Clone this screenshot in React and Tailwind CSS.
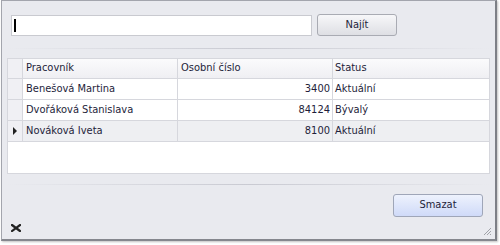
import React from 'react';

const ROWS = [
  { name: 'Benešová Martina', num: '3400', status: 'Aktuální' },
  { name: 'Dvořáková Stanislava', num: '84124', status: 'Bývalý' },
  { name: 'Nováková Iveta', num: '8100', status: 'Aktuální', current: true },
];

export default function App() {
  return (
    <div className="w-[500px] h-[245px] bg-white" style={{ fontFamily: '"DejaVu Sans Condensed", "DejaVu Sans", sans-serif' }}>
      <div className="ml-[1px] w-[496px] h-[241px] bg-[#e9eaef] border-l border-t border-[#a3a5ad] border-r-2 border-b-2 border-r-[#7d7f86] border-b-[#85878e] shadow-[1px_1px_2px_rgba(0,0,0,0.25)] flex flex-col text-[11px] text-[#1e1e3a]">
        {/* search */}
        <div className="flex items-center mt-[13px] ml-[9px] h-[22px]">
          <div className="w-[301px] h-[21px] bg-white border border-[#c9cad0] flex items-center pl-[2px]">
            <div className="w-[2px] h-[13px] bg-black" />
          </div>
          <button className="ml-[5px] w-[80px] h-[22px] rounded-[3px] border border-[#a9abb3] bg-gradient-to-b from-[#f7f7f9] to-[#dedfe4] text-[#1e1e3a]">Najít</button>
        </div>

        <div className="mt-[12px] mx-[6px] h-px bg-gradient-to-r from-[#e9eaef] via-[#c9cad2] to-[#e9eaef]" />

        {/* grid */}
        <div className="mt-[9px] ml-[5px] w-[483px] h-[116px] bg-white border border-[#d6d7dd] flex flex-col">
          <div className="flex h-[20px] bg-gradient-to-b from-[#fbfbfc] to-[#efeff3] border-b border-[#d6d7dd]">
            <div className="w-[15px] border-r border-[#d6d7dd] bg-[#f0f0f4]" />
            <div className="w-[155px] border-r border-[#d6d7dd] pl-[3px] flex items-center">Pracovník</div>
            <div className="w-[155px] border-r border-[#d6d7dd] pl-[3px] flex items-center">Osobní číslo</div>
            <div className="flex-1 pl-[2px] flex items-center">Status</div>
          </div>
          {ROWS.map((r) => (
            <div key={r.name} className={`flex h-[21px] border-b border-[#d6d7dd] ${r.current ? 'bg-[#eeeff2]' : ''}`}>
              <div className="w-[15px] border-r border-[#d6d7dd] bg-[#f0f0f4] flex items-center justify-center">
                {r.current && (
                  <svg width="5" height="8" viewBox="0 0 5 8"><path d="M0 0 L4 4 L0 8 Z" fill="#222" /></svg>
                )}
              </div>
              <div className="w-[155px] border-r border-[#d6d7dd] pl-[3px] flex items-center">{r.name}</div>
              <div className="w-[155px] border-r border-[#d6d7dd] pr-[2px] flex items-center justify-end">{r.num}</div>
              <div className="flex-1 pl-[2px] flex items-center">{r.status}</div>
            </div>
          ))}
        </div>

        <div className="mt-[10px] mx-[6px] h-px bg-gradient-to-r from-[#e9eaef] via-[#c9cad2] to-[#e9eaef]" />

        <div className="flex justify-end mt-[9px] mr-[12px]">
          <button className="w-[90px] h-[23px] rounded-[3px] border border-[#9fa6b8] bg-gradient-to-b from-[#eef2fd] to-[#cfdaf8] text-[#1e1e3a]">Smazat</button>
        </div>

        <div className="flex items-end justify-between mt-auto mb-[3px] px-[9px] h-[14px]">
          <svg width="10" height="8" viewBox="0 0 10 8" className="mb-[4px]">
            <path d="M1 1 L9 7 M9 1 L1 7" stroke="#222" strokeWidth="2.2" strokeLinecap="square" />
          </svg>
          <svg width="9" height="9" viewBox="0 0 9 9" className="-mr-[6px]">
            <path d="M8 1 L1 8 M8 4 L4 8 M8 7 L7 8" stroke="#a0a2a8" strokeWidth="1" />
          </svg>
        </div>
      </div>
    </div>
  );
}
